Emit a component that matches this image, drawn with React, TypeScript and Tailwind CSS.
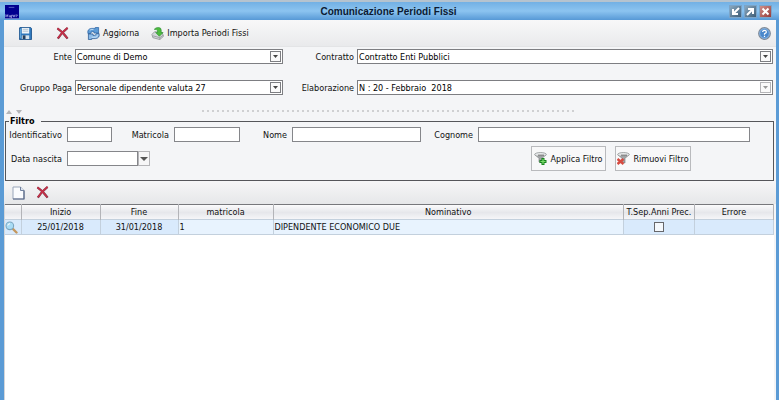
import type { ReactNode } from 'react';

const employees = [
    { inizio: '25/01/2018', fine: '31/01/2018', matricola: '1', nominativo: 'DIPENDENTE ECONOMICO DUE', errore: '' },
];

const inputClass = 'h-[15px] w-full min-w-0 border border-[#85868a] bg-white px-[2px] outline-none';

function LogoIcon() {
    return (
        <svg width="14" height="14" viewBox="0 0 15 15" className="shrink-0">
            <rect x="0" y="0" width="15" height="15" fill="#00008f" />
            <rect x="4" y="2" width="6" height="1" fill="#5a62c4" />
            <path d="M1 10v3M3 10v3M1 11l1 1 1-1M5 11v2h1v-2M7 14v-3h2v2M10 13v-2h1M12 10v3M13 11h1" stroke="#c3c8f2" strokeWidth=".7" fill="none" />
            <path d="M0 14.500h15" stroke="#6d7bc8" />
        </svg>
    );
}

function SaveIcon() {
    return (
        <svg width="13" height="13" viewBox="0 0 14 14">
            <path d="M1 .5h11.500l1 1v12H.5V1z" fill="#3079bd" stroke="#24588f" />
            <rect x="3" y="1" width="8" height="6" fill="#eef5fa" />
            <path d="M4 2.500h6M4 4.500h6" stroke="#aebfcd" />
            <rect x="3" y="9" width="8" height="4" fill="#d5e3ec" />
            <rect x="4" y="9" width="3" height="4" fill="#263f5c" />
            <path d="M1.500 2v10" stroke="#67aee0" />
        </svg>
    );
}

function DeleteIcon() {
    return (
        <svg width="13" height="13" viewBox="0 0 14 14">
            <path d="M1.500 1.500Q7 5 12.500 12.500M12.500 1Q6 6 2 12.500" stroke="#7d3547" strokeWidth="2.400" fill="none" />
            <path d="M1.500 1.500Q7 5 12 12M12.500 1Q6 6 2 12" stroke="#c83048" strokeWidth="1.600" fill="none" />
        </svg>
    );
}

function RefreshIcon() {
    return (
        <svg width="13" height="13" viewBox="0 0 14 14">
            <path d="M1 7Q0 2 5 1.500h4V.5h3.500v6H7.500V5H6Q4 5 4 7z" fill="#5c9bd6" stroke="#2a62a4" strokeWidth=".8" />
            <path d="M13 7Q14 12 9 12.500H5v1H1.500v-6h5V9H8q2 0 2-2z" fill="#8bbbe8" stroke="#24558f" strokeWidth=".8" />
            <path d="M3 3.500Q4 2.500 7 2.500M5 11h4Q11 11 11.500 9" stroke="#d3e7f8" strokeWidth=".9" fill="none" />
        </svg>
    );
}

function ImportIcon() {
    return (
        <svg width="13" height="13" viewBox="0 0 14 14">
            <path d="M1 8l3-3 8 1 1.500 4-4 3.500-7.500-2z" fill="#d4d7da" stroke="#85898e" strokeWidth=".8" />
            <path d="M2 9.500l7.500 2 3.500-2.500M9.500 11.500v2" stroke="#8b8f94" strokeWidth=".8" fill="none" />
            <path d="M3.500 2.500Q5 .5 8 .5q3 0 3 3V6h2L9 10 5 6h2V4Q6.500 2.500 3.500 2.500z" fill="#4dbb3e" stroke="#2f8f33" strokeWidth=".7" />
        </svg>
    );
}

function HelpIcon() {
    return (
        <svg width="13" height="13" viewBox="0 0 13 13">
            <circle cx="6.500" cy="6.500" r="5.800" fill="#4a88cb" stroke="#7f8a97" strokeWidth="1.200" />
            <circle cx="6.500" cy="6.500" r="4.800" fill="none" stroke="#a9cdf0" strokeWidth=".7" />
            <path d="M4.600 5Q4.700 3.400 6.500 3.400T8.400 5Q8.400 5.900 6.500 6.800V7.800M6.500 8.700v1.200" stroke="#fff" strokeWidth="1.200" fill="none" />
        </svg>
    );
}

function NewIcon() {
    return (
        <svg width="13" height="14" viewBox="0 0 13 14">
            <path d="M1 1h7.500L12 4.500V13H1z" fill="#fbfcfe" stroke="#9aa6ba" />
            <path d="M12 4.500V13H1" fill="none" stroke="#586785" strokeWidth="1.200" />
            <path d="M8.500 1v3.500H12" fill="#dce3ee" stroke="#72829f" />
        </svg>
    );
}

function FunnelIcon({ children }: { children: ReactNode }) {
    return (
        <svg width="13" height="13" viewBox="0 0 13 13" className="shrink-0">
            <path d="M1 2.500l4 4V10l3 1V6.500l4-4z" fill="#a3a6a8" stroke="#707476" strokeWidth=".6" />
            <ellipse cx="6.500" cy="2.500" rx="5.800" ry="2" fill="#e6e8e9" stroke="#85898b" strokeWidth=".7" />
            <path d="M4 3.200h6" stroke="#666" strokeWidth="1" />
            {children}
        </svg>
    );
}

function SearchIcon() {
    return (
        <svg width="13" height="13" viewBox="0 0 13 13">
            <path d="M7.500 7.500l4 4" stroke="#c4975e" strokeWidth="2.400" strokeLinecap="round" />
            <circle cx="4.800" cy="4.800" r="3.800" fill="#a9dcf5" stroke="#7aa6c0" strokeWidth="1.100" />
            <path d="M2.800 4.500Q3.200 2.800 5 2.700" stroke="#fff" fill="none" />
        </svg>
    );
}

function WindowButton({ label, color, path }: { label: string; color: string; path: string }) {
    return (
        <button aria-label={label} className={`flex size-[13px] items-center justify-center border border-[#7ba4c8] bg-linear-to-br ${color}`}>
            <svg width="11" height="11" viewBox="0 0 11 11">
                <path d={path} stroke="#fff" strokeWidth="2" fill="none" />
            </svg>
        </button>
    );
}

function Combo({ id, label, value, disabled }: { id: string; label: string; value: string; disabled?: boolean }) {
    return (
        <>
            <label htmlFor={id} className="text-right whitespace-nowrap">{label}</label>
            <div className="relative">
                <select
                    id={id}
                    disabled={disabled}
                    className="block h-[15px] w-full appearance-none border border-[#7d7e82] bg-white pr-4 pl-px text-black opacity-100"
                >
                    <option>{value}</option>
                </select>
                <span className={`pointer-events-none absolute top-[2px] right-[2px] flex h-[11px] w-[11px] items-center justify-center border bg-[#fafafa] ${disabled ? 'border-[#b5b5b8]' : 'border-[#7d7e82]'}`}>
                    <svg width="5" height="3" viewBox="0 0 5 3">
                        <path d="M0 0h5L2.500 3z" fill={disabled ? '#999' : '#444'} />
                    </svg>
                </span>
            </div>
        </>
    );
}

export default function App() {
    return (
        <div className="flex min-h-screen flex-col bg-[#5b9bd5] font-['DejaVu_Sans_Condensed','DejaVu_Sans',sans-serif] text-[9px] leading-[14px] text-[#111]">
            {/* Title bar */}
            <header className="flex h-5 items-center border-t-2 border-[#b5c3cf] bg-linear-to-b from-[#72b0e4] via-[#8cc4f0] to-[#5799d6] pt-px pr-[7px] pl-[5px]">
                <div className="w-[43px]"><LogoIcon /></div>
                <h1 className="flex-1 text-center font-['Liberation_Sans',sans-serif] text-[10px] font-bold text-[#0b1a33]">
                    Comunicazione Periodi Fissi
                </h1>
                <div className="flex gap-[2px]">
                    <WindowButton label="Riduci" color="from-[#8aa9c0] to-[#3f5d76]" path="M9 2L3.500 7.500M3 3v5h5" />
                    <WindowButton label="Ingrandisci" color="from-[#8aa9c0] to-[#3f5d76]" path="M2 9l5.500-5.500M3 3h5v5" />
                    <WindowButton label="Chiudi" color="from-[#cf8f8b] to-[#963b3a]" path="M2.500 2.500l6 6M8.500 2.500l-6 6" />
                </div>
            </header>

            <main className="mr-[3px] ml-1 flex flex-1 flex-col bg-[#f4f5f7]">
                {/* Toolbar */}
                <div className="flex h-[27px] items-center border-b border-[#e3e4e6] bg-linear-to-b from-[#f8f8f9] to-[#e9eaec] pr-[5px] pl-[15px]">
                    <button aria-label="Salva"><SaveIcon /></button>
                    <button aria-label="Elimina" className="ml-6"><DeleteIcon /></button>
                    <button className="ml-[18px] flex items-center gap-[3px]"><RefreshIcon />Aggiorna</button>
                    <button className="ml-3 flex items-center gap-[3px]"><ImportIcon />Importa Periodi Fissi</button>
                    <button aria-label="Aiuto" className="ml-auto"><HelpIcon /></button>
                </div>

                <div className="grid grid-cols-[68px_1fr_68px_2fr] items-center gap-x-[3px] gap-y-4 pt-[2px] pr-[3px]">
                    <Combo id="ente" label="Ente" value="Comune di Demo" />
                    <Combo id="contratto" label="Contratto" value="Contratto Enti Pubblici" />
                    <Combo id="gruppo" label="Gruppo Paga" value="Personale dipendente valuta 27" />
                    <Combo id="elaborazione" label="Elaborazione" value={'N : 20 - Febbraio \u00a02018'} disabled />
                </div>

                {/* Splitter */}
                <div className="flex h-5 items-end pr-5 pb-px pl-[2px]">
                    <svg width="16" height="4" viewBox="0 0 16 4">
                        <path d="M0 4l3-4 3 4zM10 0h6l-3 4z" fill="#b4b5b8" />
                    </svg>
                    <div className="mx-auto mb-[2px] h-[2px] w-1/2 bg-[linear-gradient(to_right,#cfd0d2_2px,transparent_2px)] bg-[length:5px_2px]" />
                </div>

                {/* Filtro */}
                <fieldset className="mr-[2px] ml-px h-[66px] min-w-0 border border-[#55565a] px-[3px]">
                    <legend className="px-px pr-[6px] leading-3 font-bold text-black">Filtro</legend>
                    <div className="grid grid-cols-[53px_45fr_52px_66fr_42px_129fr_47px_272fr] items-center gap-x-[5px] pr-5 text-right">
                        <label htmlFor="identificativo" className="whitespace-nowrap">Identificativo</label>
                        <input id="identificativo" className={inputClass} />
                        <label htmlFor="matricola">Matricola</label>
                        <input id="matricola" className={inputClass} />
                        <label htmlFor="nome">Nome</label>
                        <input id="nome" className={inputClass} />
                        <label htmlFor="cognome">Cognome</label>
                        <input id="cognome" className={inputClass} />
                    </div>
                    <div className="mt-1 flex items-center pr-[79px]">
                        <label htmlFor="nascita" className="w-[53px] text-right whitespace-nowrap">Data nascita</label>
                        <div className="ml-[5px] w-[71px]"><input id="nascita" className={`${inputClass} block`} /></div>
                        <button aria-label="Apri calendario" className="flex h-[15px] w-3 items-center justify-center border border-[#b5b5b8] bg-[#f6f6f7]">
                            <svg width="8" height="4" viewBox="0 0 8 4"><path d="M0 0h8L4 4z" fill="#555" /></svg>
                        </button>
                        <button className="ml-auto flex h-[25px] w-[75px] items-center justify-center gap-[3px] border border-[#b9babd] bg-[#f8f8f9] whitespace-nowrap">
                            <FunnelIcon>
                                <path d="M9 6v7M5.500 9.500h7" stroke="#19851f" strokeWidth="3" />
                                <path d="M9 7v5M6.500 9.500h5" stroke="#7bdc6b" strokeWidth="1.200" />
                            </FunnelIcon>
                            Applica Filtro
                        </button>
                        <button className="ml-[9px] flex h-[25px] w-[76px] items-center justify-center gap-[3px] border border-[#b9babd] bg-[#f8f8f9] whitespace-nowrap">
                            <FunnelIcon>
                                <path d="M.5 7l6 5M6.500 7l-6 5" stroke="#d64a40" strokeWidth="2.400" />
                            </FunnelIcon>
                            Rimuovi Filtro
                        </button>
                    </div>
                </fieldset>

                <div className="flex h-[23px] items-center gap-[11px] bg-linear-to-b from-[#f6f6f7] to-[#e6e7e9] pl-2">
                    <button aria-label="Nuovo"><NewIcon /></button>
                    <button aria-label="Elimina riga"><DeleteIcon /></button>
                </div>

                <div className="mr-[2px] flex-1 border-l border-[#d5d6d8] bg-white">
                    <table className="w-full table-fixed border-collapse border-t border-[#77787c]">
                        <colgroup>
                            <col className="w-4" />
                            <col className="w-[79px]" />
                            <col className="w-[78px]" />
                            <col className="w-[95px]" />
                            <col />
                            <col className="w-[71px]" />
                            <col className="w-[79px]" />
                        </colgroup>
                        <thead>
                            <tr className="h-[15px] bg-linear-to-b from-[#fbfbfc] via-[#e6e7eb] to-[#f8f8fa] *:border-r *:border-[#b3b4b8] *:p-0 *:font-normal *:whitespace-nowrap">
                                <th />
                                <th>Inizio</th>
                                <th>Fine</th>
                                <th>matricola</th>
                                <th>Nominativo</th>
                                <th>T.Sep.Anni Prec.</th>
                                <th>Errore</th>
                            </tr>
                        </thead>
                        <tbody>
                            {employees.map((row) => (
                                <tr key={row.matricola} className="h-[15px] bg-[#d9eafc] *:border-y *:border-r *:border-[#c3d0dd] *:p-0">
                                    <td><button aria-label="Dettaglio" className="block"><SearchIcon /></button></td>
                                    <td className="text-center">{row.inizio}</td>
                                    <td className="text-center">{row.fine}</td>
                                    <td className="bg-[#e8f3fe]"><span className="pl-px">{row.matricola}</span></td>
                                    <td className="bg-[#e8f3fe]"><span className="pl-px">{row.nominativo}</span></td>
                                    <td>
                                        <input type="checkbox" aria-label="T.Sep.Anni Prec." className="mx-auto block size-[10px] appearance-none border border-[#66676b] bg-[#f4f8fc]" />
                                    </td>
                                    <td>{row.errore}</td>
                                </tr>
                            ))}
                        </tbody>
                    </table>
                </div>
            </main>
        </div>
    );
}
